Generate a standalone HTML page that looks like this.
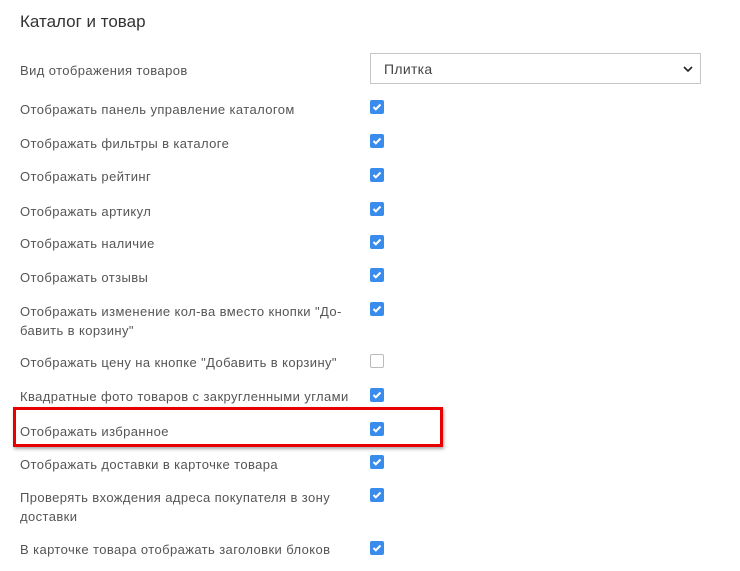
<!DOCTYPE html>
<html><head><meta charset="utf-8"><style>
body{margin:0;width:740px;height:571px;background:#fff;font-family:"Liberation Sans","DejaVu Sans",sans-serif;color:#555;position:relative;overflow:hidden}
.t{position:absolute;left:20px;font-size:13px;line-height:19px;width:335px;letter-spacing:0.4px}
.h{position:absolute;left:20px;top:12px;font-size:17px;color:#333}
.c{position:absolute;left:370px;width:14px;height:14px;border-radius:2px;background:#3a8cec}
.c svg{position:absolute;left:2px;top:2px}
.e{position:absolute;left:370px;width:12px;height:12px;border:1px solid #bbb;border-radius:2px;background:#fff}
.sel{position:absolute;left:370px;top:53px;width:331px;height:31px;border:1px solid #c6c6c6;box-sizing:border-box}
.sel span{position:absolute;left:13px;top:7px;font-size:14px;color:#444;letter-spacing:0.3px}
.sel svg{position:absolute;right:7px;top:12px}
.red{position:absolute;left:13px;top:407px;width:424px;height:34px;border:3px solid #e80000;box-shadow:1px 2px 3px rgba(0,0,0,.35)}
</style></head><body>
<div class="h">Каталог и товар</div>
<div class="t" style="top:61px">Вид отображения товаров</div>
<div class="sel"><span>Плитка</span><svg width="10" height="7" viewBox="0 0 10 7"><path d="M1 1l4 4 4-4" stroke="#222" stroke-width="1.6" fill="none"/></svg></div>
<div class="t" style="top:100px">Отображать панель управление каталогом</div>
<div class="t" style="top:134px">Отображать фильтры в каталоге</div>
<div class="t" style="top:167px">Отображать рейтинг</div>
<div class="t" style="top:202px">Отображать артикул</div>
<div class="t" style="top:234px">Отображать наличие</div>
<div class="t" style="top:268px">Отображать отзывы</div>
<div class="t" style="top:302px">Отображать изменение кол-ва вместо кнопки "До-бавить в корзину"</div>
<div class="t" style="top:353px">Отображать цену на кнопке "Добавить в корзину"</div>
<div class="t" style="top:387px">Квадратные фото товаров с закругленными углами</div>
<div class="t" style="top:422px">Отображать избранное</div>
<div class="t" style="top:455px">Отображать доставки в карточке товара</div>
<div class="t" style="top:488px">Проверять вхождения адреса покупателя в зону доставки</div>
<div class="t" style="top:540px">В карточке товара отображать заголовки блоков</div>
<div class="red"></div>
<div class="c" style="top:100px"><svg width="10" height="10" viewBox="0 0 10 10"><path d="M1.5 5l2.3 2.3L8.5 2.5" stroke="#fff" stroke-width="2" fill="none"/></svg></div>
<div class="c" style="top:134px"><svg width="10" height="10" viewBox="0 0 10 10"><path d="M1.5 5l2.3 2.3L8.5 2.5" stroke="#fff" stroke-width="2" fill="none"/></svg></div>
<div class="c" style="top:168px"><svg width="10" height="10" viewBox="0 0 10 10"><path d="M1.5 5l2.3 2.3L8.5 2.5" stroke="#fff" stroke-width="2" fill="none"/></svg></div>
<div class="c" style="top:202px"><svg width="10" height="10" viewBox="0 0 10 10"><path d="M1.5 5l2.3 2.3L8.5 2.5" stroke="#fff" stroke-width="2" fill="none"/></svg></div>
<div class="c" style="top:235px"><svg width="10" height="10" viewBox="0 0 10 10"><path d="M1.5 5l2.3 2.3L8.5 2.5" stroke="#fff" stroke-width="2" fill="none"/></svg></div>
<div class="c" style="top:268px"><svg width="10" height="10" viewBox="0 0 10 10"><path d="M1.5 5l2.3 2.3L8.5 2.5" stroke="#fff" stroke-width="2" fill="none"/></svg></div>
<div class="c" style="top:302px"><svg width="10" height="10" viewBox="0 0 10 10"><path d="M1.5 5l2.3 2.3L8.5 2.5" stroke="#fff" stroke-width="2" fill="none"/></svg></div>
<div class="e" style="top:354px"></div>
<div class="c" style="top:388px"><svg width="10" height="10" viewBox="0 0 10 10"><path d="M1.5 5l2.3 2.3L8.5 2.5" stroke="#fff" stroke-width="2" fill="none"/></svg></div>
<div class="c" style="top:422px"><svg width="10" height="10" viewBox="0 0 10 10"><path d="M1.5 5l2.3 2.3L8.5 2.5" stroke="#fff" stroke-width="2" fill="none"/></svg></div>
<div class="c" style="top:455px"><svg width="10" height="10" viewBox="0 0 10 10"><path d="M1.5 5l2.3 2.3L8.5 2.5" stroke="#fff" stroke-width="2" fill="none"/></svg></div>
<div class="c" style="top:488px"><svg width="10" height="10" viewBox="0 0 10 10"><path d="M1.5 5l2.3 2.3L8.5 2.5" stroke="#fff" stroke-width="2" fill="none"/></svg></div>
<div class="c" style="top:541px"><svg width="10" height="10" viewBox="0 0 10 10"><path d="M1.5 5l2.3 2.3L8.5 2.5" stroke="#fff" stroke-width="2" fill="none"/></svg></div>
</body></html>
